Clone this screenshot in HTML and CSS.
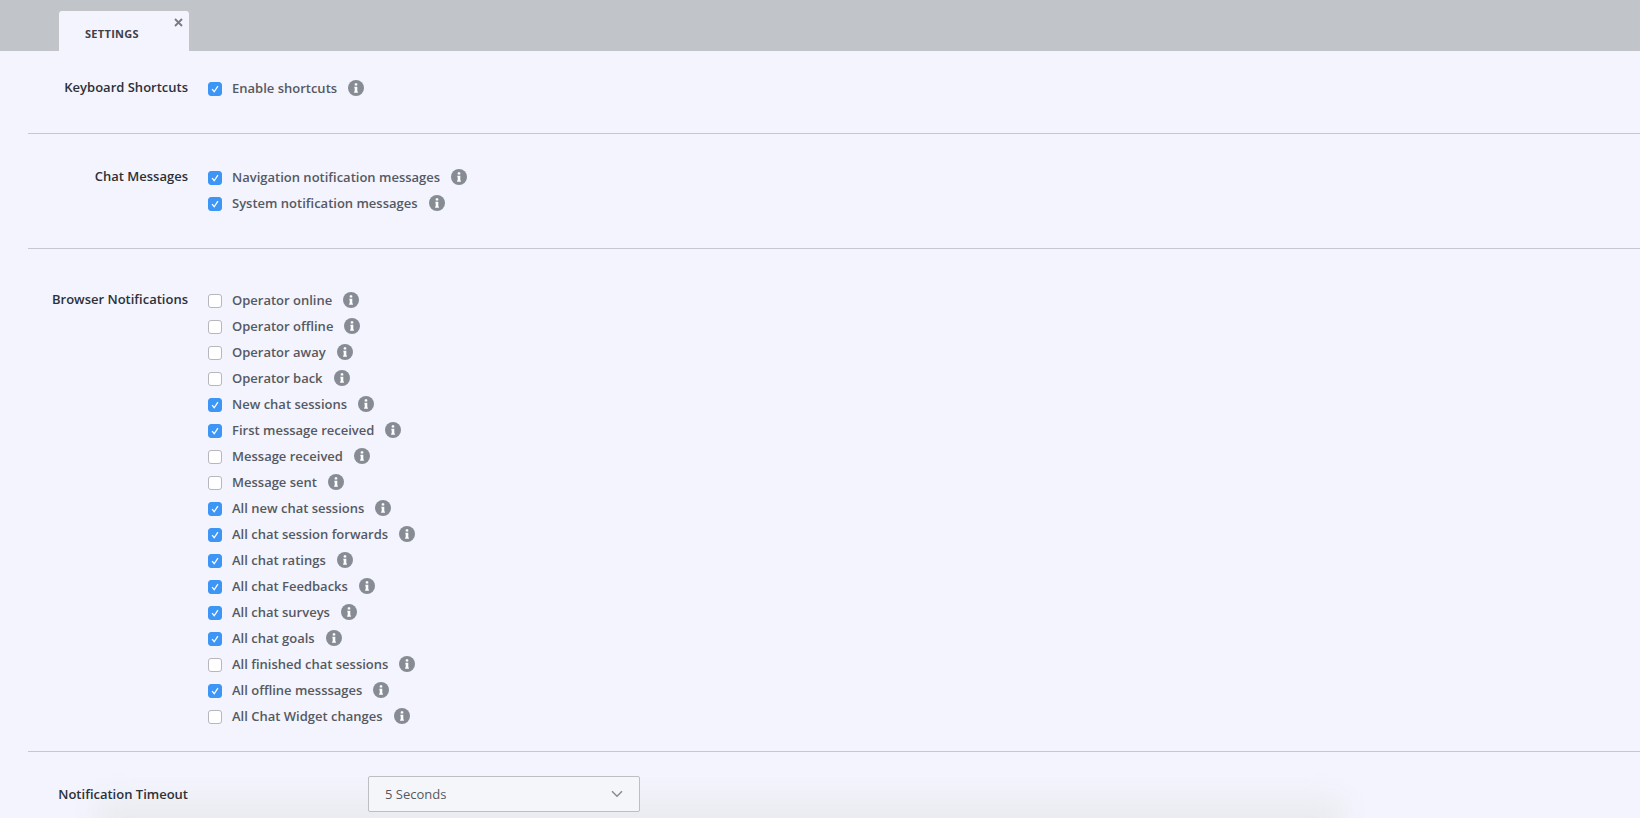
FILE: index.html
```html
<!DOCTYPE html>
<html lang="en">
<head>
  <meta charset="UTF-8">
  <title>Settings</title>
  <link rel="stylesheet" href="styles.css">
</head>
<body>
  <svg class="defs" width="0" height="0">
    <symbol id="tick" viewBox="0 0 14 14"><path d="M3.6 7.2l2.5 3 4.3-6.6" fill="none" stroke="#fff" stroke-width="1.5"/></symbol>
    <symbol id="info" viewBox="0 0 16 16"><circle cx="8" cy="8" r="8" fill="#868b94"/><rect x="6.7" y="3.3" width="2.6" height="2.3" rx="0.6" fill="#fff"/><path d="M6.4 6.8h2.9v4.6h.6v1.4H6.1v-1.4h.6V8.2h-.3z" fill="#fff"/></symbol>
  </svg>

  <div class="bottom-fade"></div>

  <div class="tabbar">
    <div class="tab">
      <span class="tab-title">SETTINGS</span>
      <svg class="tab-close" width="9" height="9" viewBox="0 0 9 9"><path d="M1 1l7 7M8 1l-7 7" stroke="#777b82" stroke-width="1.8"/></svg>
    </div>
  </div>

  <div class="content">
    <section class="group group-keys">
      <div class="group-label">Keyboard Shortcuts</div>
      <div class="options">
        <label class="option"><span class="box on"><svg><use href="#tick"/></svg></span>Enable shortcuts<svg class="info"><use href="#info"/></svg></label>
      </div>
    </section>

    <section class="group group-chat">
      <div class="group-label">Chat Messages</div>
      <div class="options">
        <label class="option"><span class="box on"><svg><use href="#tick"/></svg></span>Navigation notification messages<svg class="info"><use href="#info"/></svg></label>
        <label class="option"><span class="box on"><svg><use href="#tick"/></svg></span>System notification messages<svg class="info"><use href="#info"/></svg></label>
      </div>
    </section>

    <section class="group group-browser">
      <div class="group-label">Browser Notifications</div>
      <div class="options">
        <label class="option"><span class="box"></span>Operator online<svg class="info"><use href="#info"/></svg></label>
        <label class="option"><span class="box"></span>Operator offline<svg class="info"><use href="#info"/></svg></label>
        <label class="option"><span class="box"></span>Operator away<svg class="info"><use href="#info"/></svg></label>
        <label class="option"><span class="box"></span>Operator back<svg class="info"><use href="#info"/></svg></label>
        <label class="option"><span class="box on"><svg><use href="#tick"/></svg></span>New chat sessions<svg class="info"><use href="#info"/></svg></label>
        <label class="option"><span class="box on"><svg><use href="#tick"/></svg></span>First message received<svg class="info"><use href="#info"/></svg></label>
        <label class="option"><span class="box"></span>Message received<svg class="info"><use href="#info"/></svg></label>
        <label class="option"><span class="box"></span>Message sent<svg class="info"><use href="#info"/></svg></label>
        <label class="option"><span class="box on"><svg><use href="#tick"/></svg></span>All new chat sessions<svg class="info"><use href="#info"/></svg></label>
        <label class="option"><span class="box on"><svg><use href="#tick"/></svg></span>All chat session forwards<svg class="info"><use href="#info"/></svg></label>
        <label class="option"><span class="box on"><svg><use href="#tick"/></svg></span>All chat ratings<svg class="info"><use href="#info"/></svg></label>
        <label class="option"><span class="box on"><svg><use href="#tick"/></svg></span>All chat Feedbacks<svg class="info"><use href="#info"/></svg></label>
        <label class="option"><span class="box on"><svg><use href="#tick"/></svg></span>All chat surveys<svg class="info"><use href="#info"/></svg></label>
        <label class="option"><span class="box on"><svg><use href="#tick"/></svg></span>All chat goals<svg class="info"><use href="#info"/></svg></label>
        <label class="option"><span class="box"></span>All finished chat sessions<svg class="info"><use href="#info"/></svg></label>
        <label class="option"><span class="box on"><svg><use href="#tick"/></svg></span>All offline messsages<svg class="info"><use href="#info"/></svg></label>
        <label class="option"><span class="box"></span>All Chat Widget changes<svg class="info"><use href="#info"/></svg></label>
      </div>
    </section>

    <section class="group group-timeout">
      <div class="group-label">Notification Timeout</div>
      <div class="select">
        <span>5 Seconds</span>
        <svg width="12" height="8" viewBox="0 0 12 8"><path d="M1 1.2l5 5 5-5" fill="none" stroke="#868b94" stroke-width="1.5"/></svg>
      </div>
    </section>
  </div>
</body>
</html>
```

FILE: styles.css
```css
html, body {
  height: 100%;
}
body {
  margin: 0;
  overflow: hidden;
  background-color: #f3f4fd;
  font-family: "Open Sans", sans-serif;
  font-size: 13px;
  font-weight: 600;
  color: #565962;
}
.defs {
  position: absolute;
}
.tabbar {
  position: relative;
  height: 51px;
  box-sizing: border-box;
  padding: 11px 0 0 59px;
  background-color: #c1c4c8;
}
.tab {
  position: relative;
  display: flex;
  align-items: center;
  width: 130px;
  height: 40px;
  box-sizing: border-box;
  padding: 4px 0 0 26px;
  background-color: #f3f4fd;
  border-radius: 3px 3px 0 0;
}
.tab-title {
  font-size: 11px;
  font-weight: 700;
  letter-spacing: 0.3px;
  color: #3d4148;
}
.tab-close {
  position: absolute;
  top: 7px;
  right: 6px;
}
.content {
  position: relative;
  margin-left: 28px;
}
.group {
  display: flex;
  box-sizing: border-box;
  border-bottom: 1px solid #c6c7d2;
}
.group-keys {
  height: 83px;
  padding-top: 24px;
}
.group-chat {
  height: 115px;
  padding-top: 30px;
}
.group-browser {
  height: 503px;
  padding-top: 38px;
}
.group-timeout {
  align-items: center;
  padding-top: 24px;
  border-bottom: none;
}
.group-label {
  width: 160px;
  flex-shrink: 0;
  line-height: 20px;
  text-align: right;
  color: #2c3038;
}
.group-keys .group-label,
.group-chat .group-label,
.group-browser .group-label {
  padding-top: 2px;
}
.options {
  display: flex;
  flex-direction: column;
  margin-left: 20px;
}
.option {
  display: flex;
  align-items: center;
  height: 26px;
}
.box {
  display: block;
  width: 14px;
  height: 14px;
  box-sizing: border-box;
  margin: 2px 10px 0 0;
  background-color: #fff;
  border: 1px solid #b5b7bc;
  border-radius: 3px;
}
.box svg {
  display: block;
  width: 12px;
  height: 12px;
}
.box.on {
  background-color: #3d96f5;
  border-color: #3d96f5;
}
.info {
  width: 16px;
  height: 16px;
  margin-left: 11px;
}
.select {
  display: flex;
  align-items: center;
  justify-content: space-between;
  width: 272px;
  height: 36px;
  box-sizing: border-box;
  margin-left: 180px;
  padding: 0 16px;
  font-weight: 400;
  color: #55585f;
  background-color: #f5f6fa;
  border: 1px solid #bcbec4;
  border-radius: 2px;
}
/* faint grey glow along the bottom edge, sits behind the form */
.bottom-fade {
  position: absolute;
  left: 100px;
  right: 300px;
  bottom: -24px;
  height: 40px;
  background-color: #e8eaed;
  filter: blur(14px);
}
```
